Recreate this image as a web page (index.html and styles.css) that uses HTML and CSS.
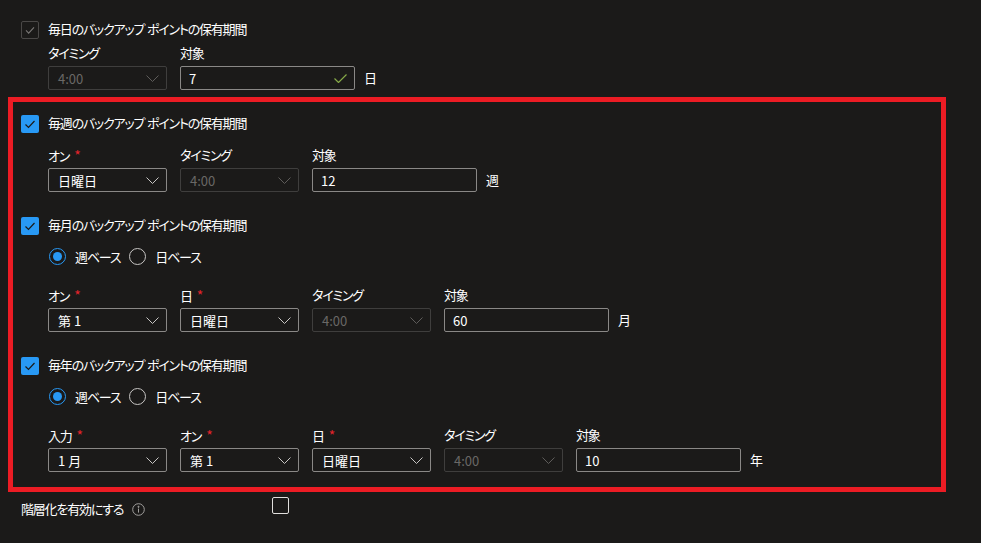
FILE: index.html
```html
<!DOCTYPE html>
<html lang="ja">
<head>
<meta charset="utf-8">
<title>保有期間</title>
<link rel="stylesheet" href="styles.css">
</head>
<body>
<div class="page">
  <section class="group daily">
    <div class="check-row">
      <span class="cb cb-disabled"><svg viewBox="0 0 18 18"><polyline points="4.5,9.5 7.5,12.5 13.5,6"/></svg></span>
      <span class="cb-label">毎日のバックアップ ポイントの保有期間</span>
    </div>
    <div class="fields">
      <div class="field">
        <div class="flabel">タイミング</div>
        <div class="select disabled"><span>4:00</span><svg class="chev" viewBox="0 0 13 7"><polyline points="0.5,0.5 6.5,6.5 12.5,0.5"/></svg></div>
      </div>
      <div class="field">
        <div class="flabel">対象</div>
        <div class="ctl-row">
          <div class="input wide"><span>7</span><svg class="ok" viewBox="0 0 13 9"><polyline points="0.5,4.5 4.5,8.5 12.5,0.5"/></svg></div>
          <span class="unit">日</span>
        </div>
      </div>
    </div>
  </section>

  <div class="highlight">
    <section class="group">
      <div class="check-row">
        <span class="cb cb-on"><svg viewBox="0 0 18 18"><polyline points="4.5,9.5 7.5,12.5 13.5,6"/></svg></span>
        <span class="cb-label">毎週のバックアップ ポイントの保有期間</span>
      </div>
      <div class="fields">
        <div class="field">
          <div class="flabel">オン<span class="req">*</span></div>
          <div class="select"><span>日曜日</span><svg class="chev" viewBox="0 0 13 7"><polyline points="0.5,0.5 6.5,6.5 12.5,0.5"/></svg></div>
        </div>
        <div class="field">
          <div class="flabel">タイミング</div>
          <div class="select disabled"><span>4:00</span><svg class="chev" viewBox="0 0 13 7"><polyline points="0.5,0.5 6.5,6.5 12.5,0.5"/></svg></div>
        </div>
        <div class="field">
          <div class="flabel">対象</div>
          <div class="ctl-row">
            <div class="input"><span>12</span></div>
            <span class="unit">週</span>
          </div>
        </div>
      </div>
    </section>

    <section class="group">
      <div class="check-row">
        <span class="cb cb-on"><svg viewBox="0 0 18 18"><polyline points="4.5,9.5 7.5,12.5 13.5,6"/></svg></span>
        <span class="cb-label">毎月のバックアップ ポイントの保有期間</span>
      </div>
      <div class="radios">
        <label class="radio"><span class="rdot on"></span><span>週ベース</span></label>
        <label class="radio"><span class="rdot"></span><span>日ベース</span></label>
      </div>
      <div class="fields after-radio">
        <div class="field">
          <div class="flabel">オン<span class="req">*</span></div>
          <div class="select"><span>第 1</span><svg class="chev" viewBox="0 0 13 7"><polyline points="0.5,0.5 6.5,6.5 12.5,0.5"/></svg></div>
        </div>
        <div class="field">
          <div class="flabel">日<span class="req">*</span></div>
          <div class="select"><span>日曜日</span><svg class="chev" viewBox="0 0 13 7"><polyline points="0.5,0.5 6.5,6.5 12.5,0.5"/></svg></div>
        </div>
        <div class="field">
          <div class="flabel">タイミング</div>
          <div class="select disabled"><span>4:00</span><svg class="chev" viewBox="0 0 13 7"><polyline points="0.5,0.5 6.5,6.5 12.5,0.5"/></svg></div>
        </div>
        <div class="field">
          <div class="flabel">対象</div>
          <div class="ctl-row">
            <div class="input"><span>60</span></div>
            <span class="unit">月</span>
          </div>
        </div>
      </div>
    </section>

    <section class="group">
      <div class="check-row">
        <span class="cb cb-on"><svg viewBox="0 0 18 18"><polyline points="4.5,9.5 7.5,12.5 13.5,6"/></svg></span>
        <span class="cb-label">毎年のバックアップ ポイントの保有期間</span>
      </div>
      <div class="radios">
        <label class="radio"><span class="rdot on"></span><span>週ベース</span></label>
        <label class="radio"><span class="rdot"></span><span>日ベース</span></label>
      </div>
      <div class="fields after-radio">
        <div class="field">
          <div class="flabel">入力<span class="req">*</span></div>
          <div class="select"><span>1 月</span><svg class="chev" viewBox="0 0 13 7"><polyline points="0.5,0.5 6.5,6.5 12.5,0.5"/></svg></div>
        </div>
        <div class="field">
          <div class="flabel">オン<span class="req">*</span></div>
          <div class="select"><span>第 1</span><svg class="chev" viewBox="0 0 13 7"><polyline points="0.5,0.5 6.5,6.5 12.5,0.5"/></svg></div>
        </div>
        <div class="field">
          <div class="flabel">日<span class="req">*</span></div>
          <div class="select"><span>日曜日</span><svg class="chev" viewBox="0 0 13 7"><polyline points="0.5,0.5 6.5,6.5 12.5,0.5"/></svg></div>
        </div>
        <div class="field">
          <div class="flabel">タイミング</div>
          <div class="select disabled"><span>4:00</span><svg class="chev" viewBox="0 0 13 7"><polyline points="0.5,0.5 6.5,6.5 12.5,0.5"/></svg></div>
        </div>
        <div class="field">
          <div class="flabel">対象</div>
          <div class="ctl-row">
            <div class="input"><span>10</span></div>
            <span class="unit">年</span>
          </div>
        </div>
      </div>
    </section>
  </div>

  <div class="tiering">
    <div class="tier-label">
      <span>階層化を有効にする</span>
      <svg class="info" viewBox="0 0 13 13"><circle cx="6.5" cy="6.5" r="5.8"/><line x1="6.5" y1="5.6" x2="6.5" y2="9.6"/><circle class="dot" cx="6.5" cy="3.8" r="0.6"/></svg>
    </div>
    <span class="cb cb-plain"></span>
  </div>
</div>
</body>
</html>
```

FILE: styles.css
```css
* { box-sizing: border-box; }

html, body {
  margin: 0;
  background: #1b1a19;
}

body {
  font-family: "Noto Sans CJK JP", "Noto Sans", sans-serif;
  font-size: 13px;
  font-weight: 400;
  color: #ffffff;
  font-feature-settings: "palt";
  letter-spacing: -1.2px;
  width: 981px;
  height: 543px;
  overflow: hidden;
}

.page {
  padding-top: 21px;
}

.daily {
  padding-left: 21px;
}

.check-row {
  display: flex;
  align-items: center;
  height: 18px;
}

.cb {
  width: 18px;
  height: 18px;
  border-radius: 2px;
  flex: none;
  display: flex;
  align-items: center;
  justify-content: center;
}

.cb svg {
  width: 18px;
  height: 18px;
  fill: none;
  stroke-width: 1.2;
}

.cb-disabled {
  border: 1px solid #4a4847;
}
.cb-disabled svg { stroke: #7a7876; }

.cb-on {
  background: #2899f5;
}
.cb-on svg { stroke: #1b1a19; }

.cb-label {
  margin-left: 9px;
  line-height: 18px;
  padding-bottom: 2px;
  word-spacing: 1px;
}

.fields {
  display: flex;
  gap: 13px;
  margin-left: 27px;
  margin-top: 14px;
}

.daily .fields {
  margin-top: 6px;
}

.fields.after-radio {
  margin-top: 23px;
}

.field {
  display: flex;
  flex-direction: column;
}

.flabel {
  line-height: 16px;
  height: 16px;
  margin-bottom: 5px;
  white-space: nowrap;
}

.req {
  color: #e3232b;
  margin-left: 5px;
  font-size: 14px;
  letter-spacing: 0;
}

.select, .input {
  height: 24px;
  border: 1px solid #8a8886;
  border-radius: 2px;
  display: flex;
  align-items: center;
  justify-content: space-between;
  padding: 0 7px 0 9px;
  letter-spacing: 0;
  white-space: pre;
}

.select {
  width: 119px;
}

.select.disabled {
  border-color: #3f3e3d;
  color: #6a6866;
}

.chev {
  width: 13px;
  height: 7px;
  fill: none;
  stroke: #c8c6c4;
  stroke-width: 1;
}

.disabled .chev {
  stroke: #5e5c5a;
}

.input {
  width: 165px;
  padding-left: 8px;
}

.input.wide {
  width: 175px;
}

.ok {
  width: 13px;
  height: 9px;
  fill: none;
  stroke: #86a948;
  stroke-width: 1.2;
}

.ctl-row {
  display: flex;
  align-items: center;
}

.unit {
  margin-left: 9px;
  line-height: 24px;
}

.highlight {
  margin: 7px 0 0 8px;
  width: 938px;
  border: 5px solid #ec1c24;
  padding: 13px 0 15px 8px;
}

.highlight .group + .group {
  margin-top: 25px;
}

.radios {
  display: flex;
  margin-top: 13px;
  margin-left: 28px;
  height: 16px;
  align-items: center;
}

.radio {
  display: flex;
  align-items: center;
  margin-right: 9px;
}

.rdot {
  width: 17px;
  height: 17px;
  border-radius: 50%;
  border: 1px solid #c8c6c4;
  margin-right: 9px;
  display: flex;
  align-items: center;
  justify-content: center;
  flex: none;
}

.rdot.on {
  border-color: #2899f5;
}

.rdot.on::after {
  content: "";
  width: 9px;
  height: 9px;
  border-radius: 50%;
  background: #2899f5;
}

.tiering {
  display: flex;
  align-items: flex-start;
  margin-top: 5px;
  padding-left: 21px;
}

.tier-label {
  width: 251px;
  display: flex;
  align-items: center;
  padding-top: 4px;
  line-height: 16px;
}

.info {
  width: 13px;
  height: 13px;
  margin-left: 9px;
  fill: none;
  stroke: #a19f9d;
  stroke-width: 1;
}

.info .dot {
  fill: #a19f9d;
}

.cb-plain {
  width: 17px;
  height: 17px;
  border: 1px solid #e1dfdd;
  border-radius: 2px;
}
```
